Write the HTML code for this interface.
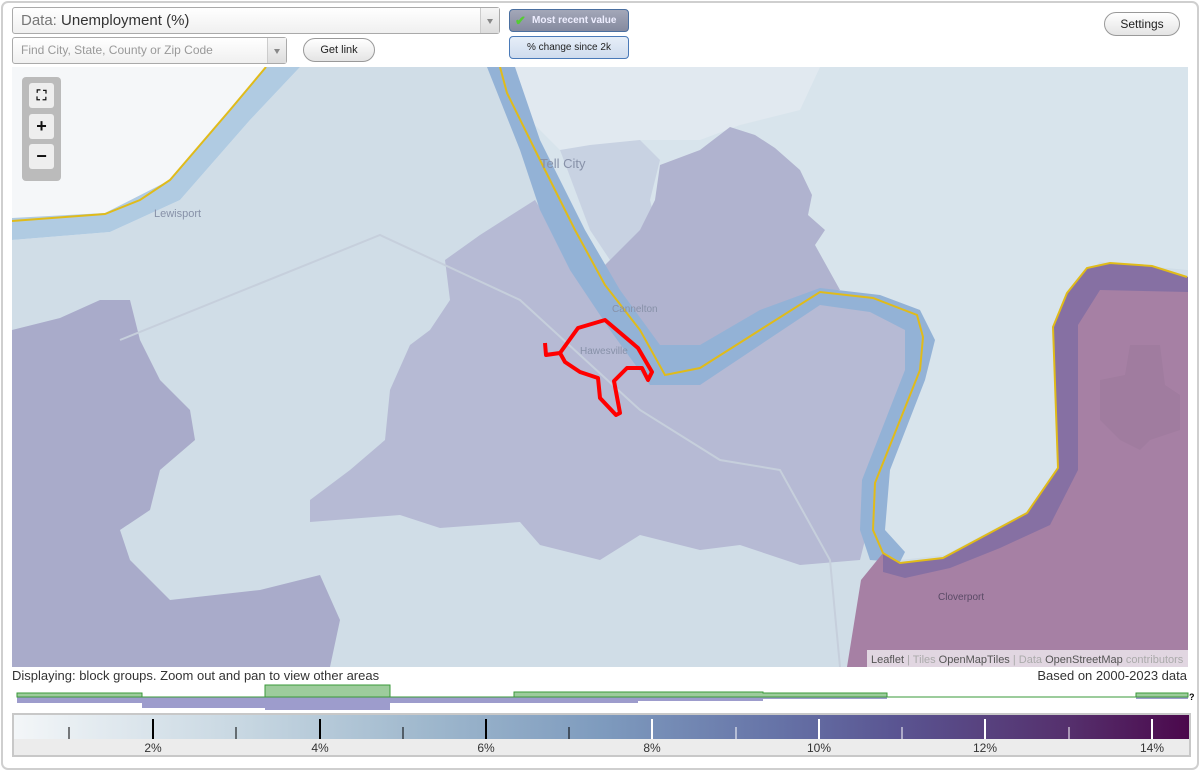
<!DOCTYPE html>
<html><head><meta charset="utf-8">
<style>
*{box-sizing:border-box;margin:0;padding:0}
body{width:1200px;height:771px;background:#fff;font-family:"Liberation Sans",sans-serif;position:relative;overflow:hidden}
.frame{position:absolute;left:1px;top:1px;width:1198px;height:769px;border:2px solid #cfcfcf;border-radius:7px}
.sel{position:absolute;border:1px solid #aaa;border-radius:3px;background:linear-gradient(#fff,#f0f0f0);font-size:14px;color:#333;padding-left:8px}
.sel .ar{position:absolute;right:0;top:0;bottom:0;width:19px;border-left:1px solid #ccc;background:linear-gradient(#f6f6f6,#ddd)}
.sel .ar:after{content:"";position:absolute;left:6px;top:50%;margin-top:-2px;border-left:3px solid transparent;border-right:3px solid transparent;border-top:5px solid #888}
.btn{position:absolute;border:1px solid #999;border-radius:12px;background:linear-gradient(#fff,#e4e4e4);font-size:11px;text-align:center;color:#222}
.zc{position:absolute;left:22px;top:77px;width:39px;height:104px;background:#bbb;border-radius:4px}
.zb{position:absolute;left:7px;width:25px;height:25px;background:#eee;border-radius:3px;text-align:center;font-weight:bold;font-size:18px;line-height:25px;color:#111}
</style></head><body>
<div class="frame"></div>
<div class="sel" style="left:12px;top:7px;width:488px;height:27px;line-height:25px;font-size:15px"><span style="color:#777">Data:</span> Unemployment (%)<div class="ar"></div></div>
<div class="sel" style="left:12px;top:37px;width:275px;height:27px;line-height:25px;font-size:12px;color:#999">Find City, State, County or Zip Code<div class="ar"></div></div>
<div class="btn" style="left:303px;top:38px;width:72px;height:24px;line-height:22px">Get link</div>
<div style="position:absolute;left:509px;top:9px;width:120px;height:23px;border:1px solid #4a6fa0;border-radius:4px;background:linear-gradient(#a3a7b8,#858a9f);color:#eef;font-size:10px;font-weight:bold;line-height:21px;padding-left:22px">Most recent value<span style="position:absolute;left:5px;top:0;color:#5c3;font-size:13px">✔</span></div>
<div style="position:absolute;left:509px;top:36px;width:120px;height:23px;border:1px solid #4a7ab8;border-radius:4px;background:linear-gradient(#e6eef8,#cfdcee);color:#222;font-size:10px;line-height:21px;text-align:center">% change since 2k</div>
<div class="btn" style="left:1104px;top:12px;width:76px;height:24px;line-height:22px;font-size:12px">Settings</div>

<svg style="position:absolute;left:12px;top:67px" width="1176" height="600" viewBox="12 67 1176 600">
<rect x="12" y="67" width="1176" height="600" fill="#d0dde7"/>
<polygon points="12,67 300,67 250,120 180,200 110,232 12,240" fill="#f5f7f9"/>
<polygon points="12,218 105,213 170,180 230,110 265,67 300,67 250,120 180,200 110,232 12,240" fill="#b0cbe2"/>
<polyline points="12,221 105,214 140,200 170,180 230,110 266,67" fill="none" stroke="#e0bb1a" stroke-width="2"/>
<polygon points="515,67 1188,67 1188,270 1100,262 1070,290 1055,330 1060,470 1030,510 945,555 900,560 880,540 875,480 920,370 918,318 870,298 820,293 760,330 700,365 660,370 615,300 540,160" fill="#d8e4ec"/>
<polygon points="515,67 820,67 800,110 740,125 700,140 640,140 560,150 530,120" fill="#e1e9f0"/>
<polygon points="560,150 590,145 640,140 660,160 650,200 660,240 610,260 590,230" fill="#c8d2e2"/>
<polygon points="660,165 700,150 730,127 755,135 775,148 800,170 812,195 808,215 825,230 815,245 840,290 820,293 760,330 700,365 660,370 615,300 600,270 620,250 640,230 655,200" fill="#b0b3cf"/>
<polygon points="12,330 60,318 100,300 130,300 140,340 160,380 190,410 195,440 160,470 150,510 120,530 130,560 170,600 260,590 320,575 340,620 330,667 12,667" fill="#a9abca"/>
<polygon points="445,260 480,235 535,200 560,240 600,290 640,345 665,372 700,366 760,330 820,293 870,300 915,320 920,350 880,450 870,520 860,560 800,565 740,545 700,550 640,535 600,560 540,545 520,522 440,528 400,515 310,522 310,500 350,470 385,440 390,390 410,345 430,330 450,300" fill="#b6bad4"/>
<polygon points="487,67 515,67 540,140 585,230 620,290 660,345 700,345 760,310 820,288 880,295 920,310 935,340 925,380 890,470 885,530 905,552 900,562 870,560 860,530 862,480 905,370 905,330 870,312 820,305 760,345 700,385 650,385 610,330 570,270 540,210 520,150" fill="#93b2d6"/>
<polygon points="1058,468 1053,327 1067,293 1087,268 1110,263 1152,266 1188,277 1188,667 847,667 861,580 883,553 900,563 943,558 1027,513" fill="#a680a4"/>
<polygon points="1058,468 1053,327 1067,293 1087,268 1110,263 1152,266 1188,277 1188,292 1100,290 1078,325 1078,470 1050,525 1000,548 950,568 905,578 883,572 883,553 900,563 943,558 1027,513" fill="#8670a3"/>
<polygon points="1130,345 1160,345 1165,385 1180,395 1180,430 1150,440 1140,450 1120,440 1100,420 1100,380 1125,375" fill="#a07c9f"/>
<path d="M120,340 L380,235 L520,300 L640,410 L720,460 L780,470 L830,560 L840,667" fill="none" stroke="#c6cfdc" stroke-width="2"/>
<polyline points="500,67 507,93 540,160 575,230 605,285 640,330 665,375 700,368 760,330 820,292 873,298 917,315 923,337 920,370 875,483 873,530 883,553 900,563 943,558 1027,513 1058,468 1053,327 1067,293 1087,268 1110,263 1152,266 1187,277" fill="none" stroke="#e0bb1a" stroke-width="2"/>
<path d="M545,343 L546,355 L560,353 L578,328 L605,320 L638,348 L652,372 L648,380 L642,368 L627,368 L614,381 L620,413 L616,415 L600,398 L598,378 L580,372 L565,362 L560,353 L545,355" fill="none" stroke="#f00" stroke-width="4" stroke-linejoin="round"/>
<g font-family="Liberation Sans,sans-serif" fill="#8791a8" font-size="11">
<text x="154" y="217">Lewisport</text>
<text x="540" y="168" font-size="13">Tell City</text>
<text x="612" y="312" font-size="10">Cannelton</text>
<text x="580" y="354" font-size="10">Hawesville</text>
<text x="938" y="600" fill="#5a4a66" font-size="10">Cloverport</text>
</g>
<rect x="867" y="650" width="321" height="17" fill="#e8dfe8" opacity="0.9"/>
<text x="871" y="663" font-family="Liberation Sans,sans-serif" font-size="11" fill="#555">Leaflet <tspan fill="#aaa">| Tiles</tspan> OpenMapTiles <tspan fill="#aaa">| Data</tspan> OpenStreetMap <tspan fill="#aaa">contributors</tspan></text>
</svg>
<div class="zc">
<div class="zb" style="top:6px;font-size:14px">⛶</div>
<div class="zb" style="top:37px">+</div>
<div class="zb" style="top:67px">−</div>
</div>
<div style="position:absolute;left:12px;top:668px;font-size:13px;color:#333">Displaying: block groups. Zoom out and pan to view other areas</div>
<div style="position:absolute;right:13px;top:668px;font-size:13px;color:#333">Based on 2000-2023 data</div>
<svg style="position:absolute;left:0;top:680px" width="1200" height="32">
<g fill="#9d9ccc">
<rect x="17" y="17" width="125" height="6"/><rect x="142" y="17" width="123" height="11"/><rect x="265" y="17" width="125" height="13"/><rect x="390" y="17" width="124" height="6"/><rect x="514" y="17" width="124" height="6"/><rect x="638" y="17" width="125" height="4"/><rect x="763" y="17" width="124" height="2"/><rect x="1136" y="17" width="52" height="2"/>
</g>
<path d="M17,17 V13 H142 V17 H265 V5 H390 V17 H514 V12 H763 V13 H887 V17 H1136 V13 H1188 V17 Z" fill="#9dcc9c" stroke="#3a9a3a" stroke-width="1"/>
<text x="1189" y="20" font-size="9" font-weight="bold" font-family="Liberation Sans,sans-serif">?</text>
</svg>
<div style="position:absolute;left:12px;top:713px;width:1179px;height:44px;border:2px solid #c8c8c8;background:#ececec">
<div style="position:absolute;left:0;top:0;right:0;height:24px;background:linear-gradient(90deg,#f3f6f8 0%,#c6d6e1 20%,#9fb8cd 35%,#7e9bbe 50%,#6673a7 65%,#5a5592 75%,#552f6c 90%,#4b084c 100%)"></div>
<svg style="position:absolute;left:-14px;top:0" width="1190" height="40" font-family="Liberation Sans,sans-serif" font-size="12" fill="#333">
<g stroke-width="2">
<line x1="69" y1="12" x2="69" y2="24" stroke="#000" stroke-width="1"/>
<line x1="153" y1="4" x2="153" y2="24" stroke="#000"/>
<line x1="236" y1="12" x2="236" y2="24" stroke="#000" stroke-width="1"/>
<line x1="320" y1="4" x2="320" y2="24" stroke="#000"/>
<line x1="403" y1="12" x2="403" y2="24" stroke="#000" stroke-width="1"/>
<line x1="486" y1="4" x2="486" y2="24" stroke="#000"/>
<line x1="569" y1="12" x2="569" y2="24" stroke="#000" stroke-width="1"/>
<line x1="652" y1="4" x2="652" y2="24" stroke="#fff"/>
<line x1="736" y1="12" x2="736" y2="24" stroke="#fff" stroke-width="1"/>
<line x1="819" y1="4" x2="819" y2="24" stroke="#fff"/>
<line x1="902" y1="12" x2="902" y2="24" stroke="#fff" stroke-width="1"/>
<line x1="985" y1="4" x2="985" y2="24" stroke="#fff"/>
<line x1="1069" y1="12" x2="1069" y2="24" stroke="#fff" stroke-width="1"/>
<line x1="1152" y1="4" x2="1152" y2="24" stroke="#fff"/>
</g>
<g text-anchor="middle"><text x="153" y="37">2%</text><text x="320" y="37">4%</text><text x="486" y="37">6%</text><text x="652" y="37">8%</text><text x="819" y="37">10%</text><text x="985" y="37">12%</text><text x="1152" y="37">14%</text></g>
</svg>
</div>
</body></html>
